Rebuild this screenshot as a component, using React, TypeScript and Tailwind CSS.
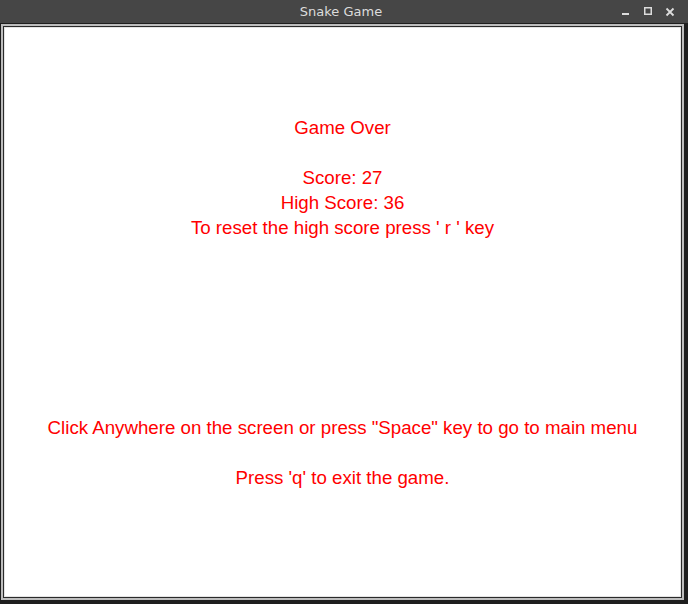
export default function App() {
  return (
    <div className="w-[688px] h-[604px] bg-[#1e1e1e] flex flex-col overflow-hidden">
      {/* title bar */}
      <div className="h-[23px] bg-[#464646] relative flex items-center justify-center shrink-0">
        <span className="text-[13px] text-[#dcdcdc] leading-none pr-[6px]" style={{ fontFamily: '"DejaVu Sans", sans-serif' }}>
          Snake Game
        </span>
        <svg width="688" height="23" className="absolute right-0 top-0" viewBox="0 0 688 23">
          <rect x="622" y="13" width="7" height="2" fill="#dcdcdc" />
          <rect x="644.75" y="7.75" width="6.5" height="6.5" fill="none" stroke="#dcdcdc" strokeWidth="1.5" />
          <path d="M666.5 8.5 L673.5 15.5 M673.5 8.5 L666.5 15.5" stroke="#dcdcdc" strokeWidth="1.8" />
        </svg>
      </div>

      {/* window frame */}
      <div className="flex-1 flex pl-px pt-px pr-[4px] pb-[4px]">
        <div className="flex-1 flex border-2 border-[#bdbdbd]">
          <div className="flex-1 flex border border-[#2a2a2a]">
            <div className="flex-1 flex border border-[#e4e4e4]">
              <div
                className="flex-1 bg-white flex flex-col items-center pt-[87px] text-[18.7px] leading-[25px] text-[#ff0000] whitespace-pre"
                style={{ fontFamily: '"Liberation Sans", Arial, sans-serif' }}
              >
                <div>Game Over</div>
                <div className="h-[25px]" />
                <div>Score: 27</div>
                <div>High Score: 36</div>
                <div>To reset the high score press ' r ' key</div>
                <div className="mt-[175px]">Click Anywhere on the screen or press "Space" key to go to main menu</div>
                <div className="h-[25px]" />
                <div>Press 'q' to exit the game.</div>
              </div>
            </div>
          </div>
        </div>
      </div>
    </div>
  );
}
